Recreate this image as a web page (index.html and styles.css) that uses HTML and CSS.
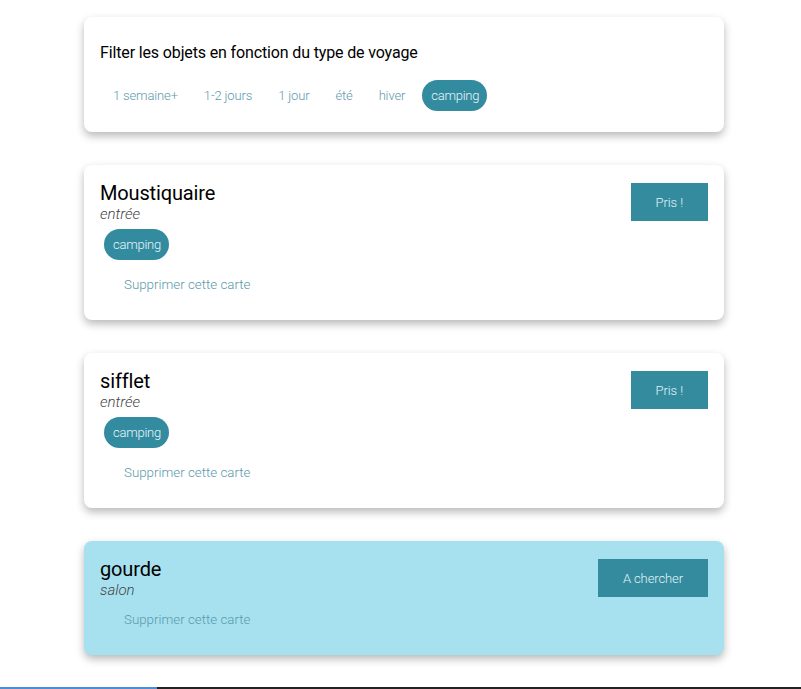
FILE: index.html
```html
<!DOCTYPE html>
<html lang="fr">
<head>
<meta charset="utf-8">
<title>Objets de voyage</title>
<link rel="stylesheet" href="styles.css">
</head>
<body>
<main class="page">
  <section class="card filter-card">
    <h2 class="filter-title">Filter les objets en fonction du type de voyage</h2>
    <div class="tags">
      <button class="tag">1 semaine+</button>
      <button class="tag">1-2 jours</button>
      <button class="tag">1 jour</button>
      <button class="tag">été</button>
      <button class="tag">hiver</button>
      <button class="tag active">camping</button>
    </div>
  </section>

  <article class="card item">
    <div class="item-main">
      <h3 class="item-name">Moustiquaire</h3>
      <div class="item-room">entrée</div>
      <div class="tags item-tags"><span class="tag active">camping</span></div>
      <button class="delete">Supprimer cette carte</button>
    </div>
    <button class="status">Pris !</button>
  </article>

  <article class="card item">
    <div class="item-main">
      <h3 class="item-name">sifflet</h3>
      <div class="item-room">entrée</div>
      <div class="tags item-tags"><span class="tag active">camping</span></div>
      <button class="delete">Supprimer cette carte</button>
    </div>
    <button class="status">Pris !</button>
  </article>

  <article class="card item todo">
    <div class="item-main">
      <h3 class="item-name">gourde</h3>
      <div class="item-room">salon</div>
      <button class="delete">Supprimer cette carte</button>
    </div>
    <button class="status">A chercher</button>
  </article>
</main>
<div class="progress"><div class="progress-fill"></div></div>
</body>
</html>
```

FILE: styles.css
```css
* { box-sizing: border-box; }

html, body {
  margin: 0;
  padding: 0;
  background: #ffffff;
  font-family: Roboto, "Liberation Sans", Arial, sans-serif;
  color: #000;
}

.page {
  width: 724px;
  padding: 17px 0 40px 84px;
  display: flex;
  flex-direction: column;
  gap: 33px;
}

.card {
  background: #ffffff;
  border-radius: 8px;
  box-shadow: 0 4px 8px rgba(0, 0, 0, 0.28);
  padding: 16px;
}

.filter-card {
  padding-bottom: 17px;
}

.filter-title {
  margin: 10px 0 14px;
  font-size: 16px;
  line-height: 19px;
  font-weight: 400;
  letter-spacing: -0.14px;
}

.tags {
  display: flex;
  flex-wrap: wrap;
}

.tag {
  margin: 4px;
  height: 31px;
  line-height: 31px;
  padding: 0 9px;
  border: none;
  border-radius: 16px;
  background: transparent;
  font-family: inherit;
  font-size: 13px;
  font-weight: 300;
  letter-spacing: -0.15px;
  color: #5c9aab;
  display: inline-block;
}

.item-tags .tag {
  margin: 5px 4px;
}

.tag.active {
  background: #338b9f;
  color: #e8f7fb;
  padding: 0 8px 0 9px;
  letter-spacing: -0.25px;
}

.item {
  display: flex;
  justify-content: space-between;
  align-items: flex-start;
}

.item.todo {
  background: #a7e1ef;
}

.item-name {
  margin: 0;
  font-size: 20px;
  line-height: 24px;
  font-weight: 400;
  letter-spacing: -0.15px;
}

.item-room {
  font-size: 15px;
  line-height: 19px;
  font-style: italic;
  font-weight: 300;
  color: #444;
}

.delete {
  display: block;
  margin: 4px 4px 3px;
  height: 32px;
  line-height: 32px;
  padding: 0 20px;
  border: none;
  background: transparent;
  font-family: inherit;
  font-size: 13.33px;
  font-weight: 300;
  color: #5a99ab;
}

.status {
  margin-top: 2px;
  height: 38px;
  padding: 0 25px;
  border: none;
  border-radius: 0;
  background: #348b9e;
  font-family: inherit;
  font-size: 13px;
  font-weight: 300;
  letter-spacing: -0.1px;
  color: #e2f5f9;
}

.progress {
  position: fixed;
  left: 0;
  right: 0;
  bottom: 0;
  height: 2px;
  background: #222222;
}

.progress-fill {
  width: 157px;
  height: 100%;
  background: #4a8fd6;
}
```
